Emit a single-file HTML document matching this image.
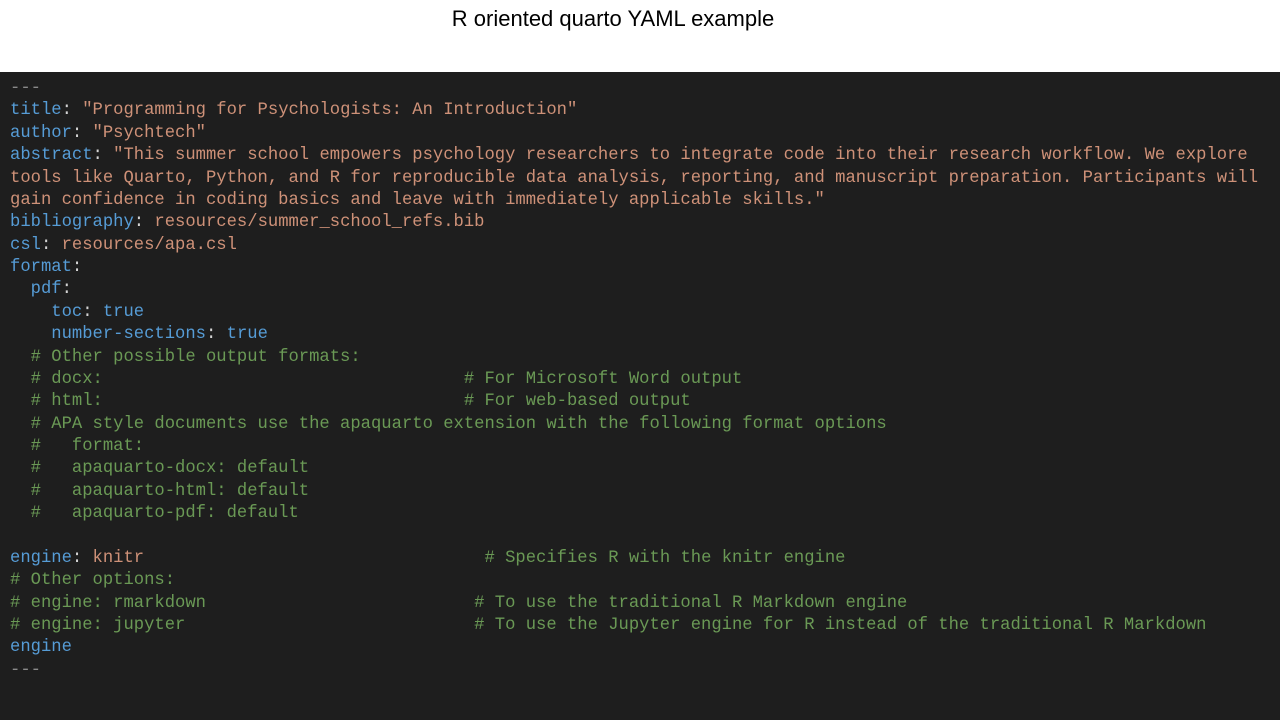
<!DOCTYPE html>
<html><head><style>
body{margin:0;width:1280px;height:720px;background:#fff;position:relative;overflow:hidden}
.t{position:absolute;top:6px;left:0;width:1226px;text-align:center;font:22px "Liberation Sans",sans-serif;color:#000}
.box{position:absolute;top:72px;left:0;width:1280px;height:648px;background:#1e1e1e}
pre{position:absolute;left:10px;top:78px;margin:0;font:17.2px/22.38px "Liberation Mono",monospace;color:#d4d4d4}
.k{color:#569cd6}.s{color:#ce9178}.c{color:#6a9955}.d{color:#8a8a8a}
</style></head><body>
<div class="t">R oriented quarto YAML example</div>
<div class="box"></div>
<pre><span class="d">---</span>
<span class="k">title</span>: <span class="s">"Programming for Psychologists: An Introduction"</span>
<span class="k">author</span>: <span class="s">"Psychtech"</span>
<span class="k">abstract</span>: <span class="s">"This summer school empowers psychology researchers to integrate code into their research workflow. We explore
tools like Quarto, Python, and R for reproducible data analysis, reporting, and manuscript preparation. Participants will
gain confidence in coding basics and leave with immediately applicable skills."</span>
<span class="k">bibliography</span>: <span class="s">resources/summer_school_refs.bib</span>
<span class="k">csl</span>: <span class="s">resources/apa.csl</span>
<span class="k">format</span>:
  <span class="k">pdf</span>:
    <span class="k">toc</span>: <span class="k">true</span>
    <span class="k">number-sections</span>: <span class="k">true</span>
<span class="c">  # Other possible output formats:</span>
<span class="c">  # docx:                                   # For Microsoft Word output</span>
<span class="c">  # html:                                   # For web-based output</span>
<span class="c">  # APA style documents use the apaquarto extension with the following format options</span>
<span class="c">  #   format:</span>
<span class="c">  #   apaquarto-docx: default</span>
<span class="c">  #   apaquarto-html: default</span>
<span class="c">  #   apaquarto-pdf: default</span>

<span class="k">engine</span>: <span class="s">knitr</span>                                 <span class="c"># Specifies R with the knitr engine</span>
<span class="c"># Other options:</span>
<span class="c"># engine: rmarkdown                          # To use the traditional R Markdown engine</span>
<span class="c"># engine: jupyter                            # To use the Jupyter engine for R instead of the traditional R Markdown</span>
<span class="k">engine</span>
<span class="d">---</span></pre>
</body></html>
